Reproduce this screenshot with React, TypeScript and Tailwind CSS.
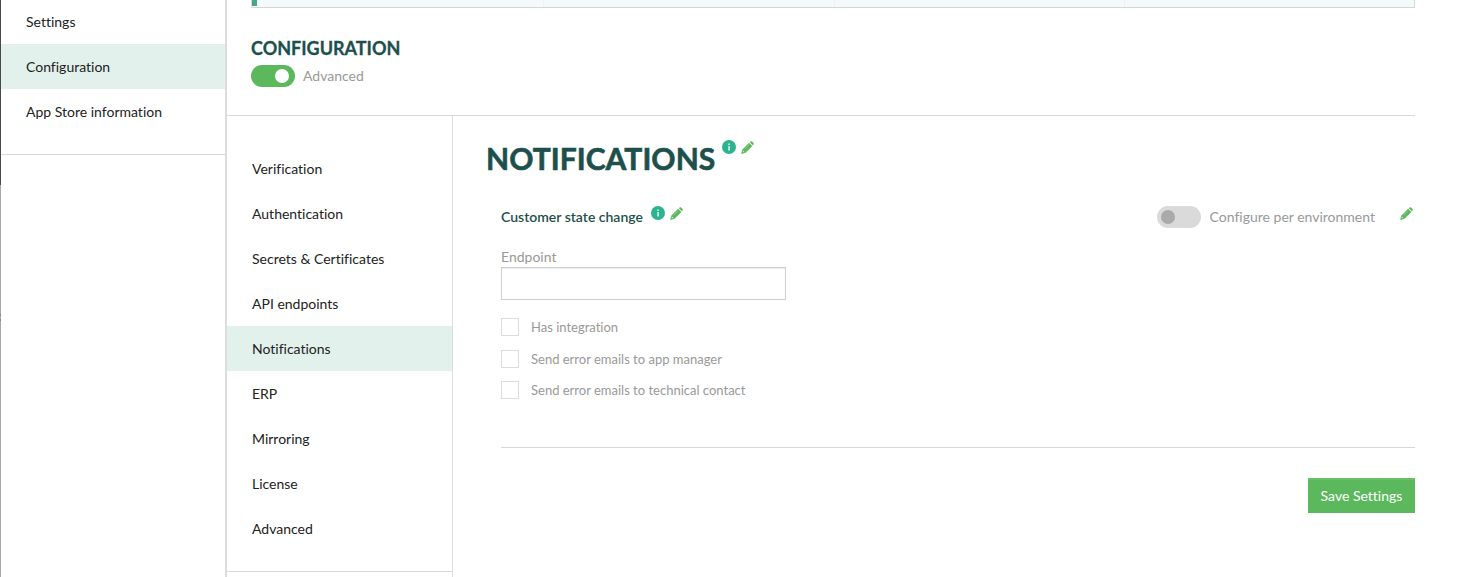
import React from "react";

function InfoIcon() {
  return (
    <svg className="block h-[14px] w-[14px]" viewBox="0 0 14 14">
      <circle cx="7" cy="7" r="7" fill="#2cb391" />
      <path d="M6.3 3.6h1.5v1.5H6.3zM6.3 6h1.5v4.4H6.3z" fill="#e4f5ef" />
    </svg>
  );
}

function PencilIcon() {
  return (
    <svg className="mt-px block h-[13px] w-[13px]" viewBox="0 0 13 13" fill="#5cb85c">
      <path d="M8.9 1.3 9.7.5c.4-.4.9-.4 1.3 0L12.6 2.1c.4.4.4.9 0 1.3l-.8.8z" />
      <path
        d="M8.1 1.9 11.2 5 4.7 11.5.4 12.7 1.6 8.4zM2.2 9.5l-.6 1.9 1.9-.6z"
        fillRule="evenodd"
        stroke="#5cb85c"
        strokeWidth=".4"
      />
      <path d="M3.4 8.3 8 3.7" stroke="#a9dca5" strokeWidth=".6" />
    </svg>
  );
}

function MenuItem({ label, active = false }: { label: string; active?: boolean }) {
  return (
    <li className={`h-[45px] pl-[25px] leading-[45px] ${active ? "bg-[#e2f1ec]" : ""}`}>{label}</li>
  );
}

function CheckRow({ label }: { label: string }) {
  return (
    <label className="flex h-[18px] items-center">
      <span className="h-[18px] w-[18px] border border-[#dcdcdc] bg-white" />
      <span className="ml-3 text-[13px] leading-[18px]">{label}</span>
    </label>
  );
}

const sections = [
  "Verification",
  "Authentication",
  "Secrets & Certificates",
  "API endpoints",
  "Notifications",
  "ERP",
  "Mirroring",
  "License",
  "Advanced",
];

export default function App() {
  return (
    <div className="flex h-[577px] w-[1458px] overflow-hidden bg-white font-['Lato',sans-serif] text-[14px] text-[#222] [font-variant-ligatures:none]">
      <div className="flex w-px shrink-0 flex-col bg-[#a8a8a8]">
        <div className="h-[185px] bg-[#4a4a4a]" />
        <div className="mt-[129px] h-[2px] bg-[#888]" />
        <div className="mt-[3px] h-[2px] bg-[#888]" />
      </div>
      <aside className="w-[226px] shrink-0 border-r-2 border-[#dcdcdc]">
        <ul className="-mt-px h-[156px] border-b border-[#d8d8d8]">
          <MenuItem label="Settings" />
          <MenuItem label="Configuration" active />
          <MenuItem label="App Store information" />
        </ul>
      </aside>
      <main className="flex w-[1188px] shrink-0 flex-col">
        <div className="ml-6 flex h-2 border-r border-b border-[#d5d5d5] bg-[#f4faf9]">
          <div className="h-[6px] w-[6px] border-l border-[#d5d5d5] bg-[#46a68a]" />
          <div className="w-[287px] border-r border-[#edf1f1]" />
          <div className="w-[291px] border-r border-[#edf1f1]" />
          <div className="w-[290px] border-r border-[#edf1f1]" />
        </div>
        <header className="h-[108px] border-b border-[#d8d8d8] pt-[29px] pl-6">
          <h2 className="h-7 text-[18px] leading-[22px] font-bold text-[#1d4f4c] [-webkit-text-stroke:0.3px_#1d4f4c]">CONFIGURATION</h2>
          <div className="flex h-[22px] items-center text-[#999]">
            <span className="flex h-[22px] w-[44px] items-center justify-end rounded-full bg-[#5cb85c] pr-[6px]">
              <span className="h-[14px] w-[14px] rounded-full bg-white" />
            </span>
            <span className="ml-2 h-[22px] leading-[21px]">Advanced</span>
          </div>
        </header>
        <div className="flex flex-1">
          <nav className="w-[226px] shrink-0 border-r border-[#dcdcdc] pt-[30px]">
            <ul className="h-[426px] border-b border-[#d8d8d8]">
              {sections.map((s) => (
                <MenuItem key={s} label={s} active={s === "Notifications"} />
              ))}
            </ul>
          </nav>
          <section className="flex w-[962px] flex-col pl-[33px]">
            <div className="flex h-[90px] pt-6">
              <h1 className="h-10 w-[229px] text-[30px] leading-[36px] font-bold tracking-[0.05px] text-[#1d4f4c] [-webkit-text-stroke:0.6px_#1d4f4c]">NOTIFICATIONS</h1>
              <div className="ml-[7px] flex gap-[5px]">
                <InfoIcon />
                <PencilIcon />
              </div>
            </div>
            <div className="ml-[15px] flex h-[242px] flex-col border-b border-[#d8d8d8] text-[#999]">
              <div className="flex h-[22px]">
                <h3 className="w-[143px] leading-[22px] font-semibold whitespace-nowrap text-[#1d4f4c]">Customer state change</h3>
                <div className="ml-[7px] flex gap-[5px]">
                  <InfoIcon />
                  <PencilIcon />
                </div>
                <div className="ml-auto flex h-[22px] items-center">
                  <span className="flex h-[22px] w-[44px] items-center rounded-full bg-[#dadada] pl-[4px]">
                    <span className="h-[14px] w-[14px] rounded-full bg-[#aaa]" />
                  </span>
                  <span className="ml-[9px] h-[22px] leading-[21px]">Configure per environment</span>
                </div>
                <div className="mr-[2px] ml-[25px]">
                  <PencilIcon />
                </div>
              </div>
              <label className="mt-[19px] block h-5 leading-5">Endpoint</label>
              <input className="h-[33px] w-[285px] border border-[#cbd0d6] bg-white shadow-[inset_0_1px_1px_rgba(0,0,0,0.075)] outline-none" />
              <div className="mt-[18px] flex flex-col">
                <CheckRow label="Has integration" />
                <div className="h-[14px]" />
                <CheckRow label="Send error emails to app manager" />
                <div className="h-[13px]" />
                <CheckRow label="Send error emails to technical contact" />
              </div>
            </div>
            <button className="mt-[30px] h-[35px] w-[107px] self-end bg-[#5cb85c] text-white shadow-[inset_0_2px_0_#68bf68]">
              Save Settings
            </button>
          </section>
        </div>
      </main>
    </div>
  );
}
